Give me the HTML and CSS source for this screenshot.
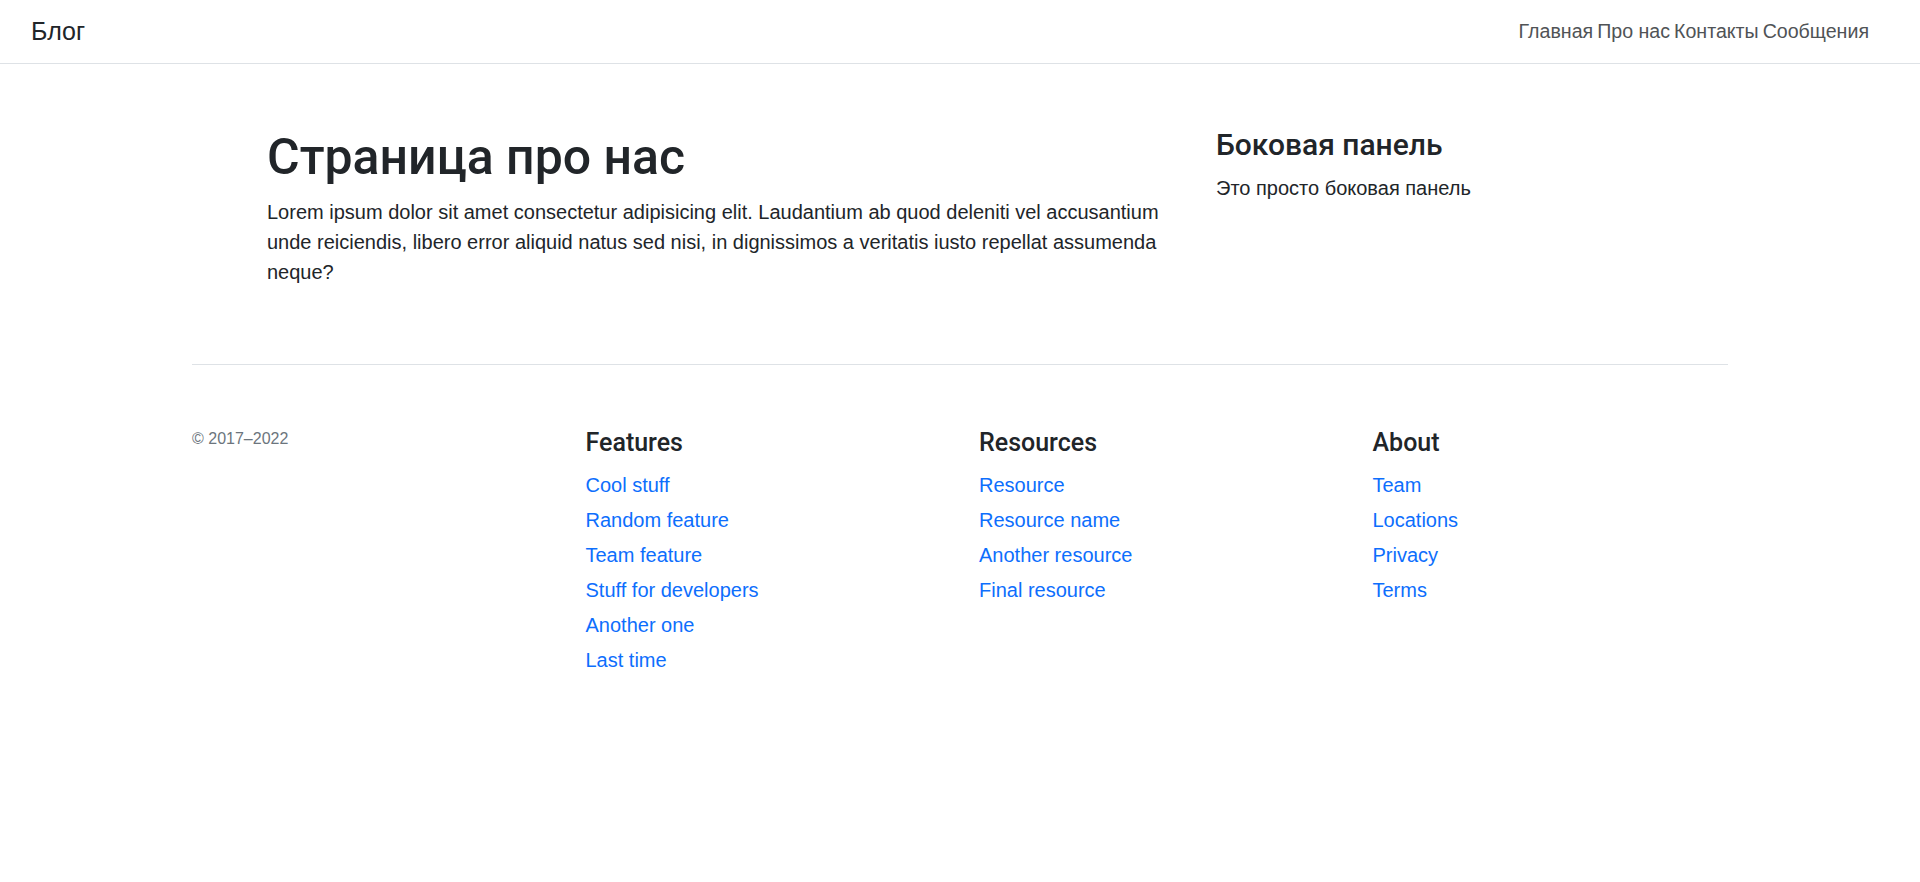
FILE: index.html
```html
<!DOCTYPE html>
<html lang="ru">
<head>
<meta charset="utf-8">
<title>Блог</title>
<link rel="stylesheet" href="styles.css">
</head>
<body>
<header class="navbar">
  <a class="brand" href="#">Блог</a>
  <nav class="nav">
    <a href="#">Главная</a>
    <a href="#">Про нас</a>
    <a href="#">Контакты</a>
    <a href="#">Сообщения</a>
  </nav>
</header>

<main class="main">
  <section class="content">
    <h1 class="title">Страница про нас</h1>
    <p class="lead">Lorem ipsum dolor sit amet consectetur adipisicing elit. Laudantium ab quod deleniti vel accusantium unde reiciendis, libero error aliquid natus sed nisi, in dignissimos a veritatis iusto repellat assumenda neque?</p>
  </section>
  <aside class="sidebar">
    <h3 class="side-title">Боковая панель</h3>
    <p class="side-text">Это просто боковая панель</p>
  </aside>
</main>

<footer class="footer">
  <hr class="divider">
  <div class="footer-row">
    <div class="footer-col">
      <small class="copy">© 2017–2022</small>
    </div>
    <div class="footer-col">
      <h5 class="footer-title">Features</h5>
      <ul class="links">
        <li><a href="#">Cool stuff</a></li>
        <li><a href="#">Random feature</a></li>
        <li><a href="#">Team feature</a></li>
        <li><a href="#">Stuff for developers</a></li>
        <li><a href="#">Another one</a></li>
        <li><a href="#">Last time</a></li>
      </ul>
    </div>
    <div class="footer-col">
      <h5 class="footer-title">Resources</h5>
      <ul class="links">
        <li><a href="#">Resource</a></li>
        <li><a href="#">Resource name</a></li>
        <li><a href="#">Another resource</a></li>
        <li><a href="#">Final resource</a></li>
      </ul>
    </div>
    <div class="footer-col">
      <h5 class="footer-title">About</h5>
      <ul class="links">
        <li><a href="#">Team</a></li>
        <li><a href="#">Locations</a></li>
        <li><a href="#">Privacy</a></li>
        <li><a href="#">Terms</a></li>
      </ul>
    </div>
  </div>
</footer>
</body>
</html>
```
FILE: styles.css
```css
* { box-sizing: border-box; }
html, body { margin: 0; padding: 0; }
body {
  font-family: "Liberation Sans", Arial, sans-serif;
  font-size: 20px;
  line-height: 1.5;
  color: #212529;
  background: #fff;
}
a { text-decoration: none; }

.navbar {
  height: 64px;
  border-bottom: 1px solid #dee2e6;
  display: flex;
  align-items: center;
  justify-content: space-between;
  padding: 0 51px 1px 31px;
}
.brand {
  font-size: 25px;
  line-height: 30px;
  color: #212529;
}
.nav {
  display: flex;
  gap: 4px;
}
.nav a {
  color: #505356;
  font-size: 19.6px;
  line-height: 30px;
}

.main {
  display: grid;
  grid-template-columns: 920px 512px;
  column-gap: 29px;
  padding: 63px 0 57px 267px;
}
.title {
  font-family: Roboto, "Liberation Sans", sans-serif;
  font-weight: 500;
  font-size: 50px;
  line-height: 60px;
  margin: 0 0 10px;
}
.lead {
  margin: 0 0 20px;
  font-size: 20px;
  line-height: 30px;
}
.side-title {
  font-family: Roboto, "Liberation Sans", sans-serif;
  font-weight: 500;
  font-size: 30px;
  line-height: 36px;
  margin: 0 0 10px;
}
.side-text { margin: 0; }

.footer {
  padding: 0 192px 60px;
}
.divider {
  border: 0;
  border-top: 1px solid #dee2e6;
  margin: 0;
}
.footer-row {
  display: grid;
  grid-template-columns: repeat(4, 393.5px);
  padding-top: 61px;
}
.copy {
  display: block;
  color: #6c757d;
  font-size: 16px;
  line-height: 24px;
  padding-top: 1px;
}
.footer-title {
  font-family: Roboto, "Liberation Sans", sans-serif;
  font-weight: 500;
  font-size: 25px;
  line-height: 30px;
  margin: 2px 0 12px;
}
.links {
  list-style: none;
  margin: 0;
  padding: 0;
}
.links li {
  margin-bottom: 5px;
  line-height: 30px;
}
.links a {
  color: #0d6efd;
}
```
